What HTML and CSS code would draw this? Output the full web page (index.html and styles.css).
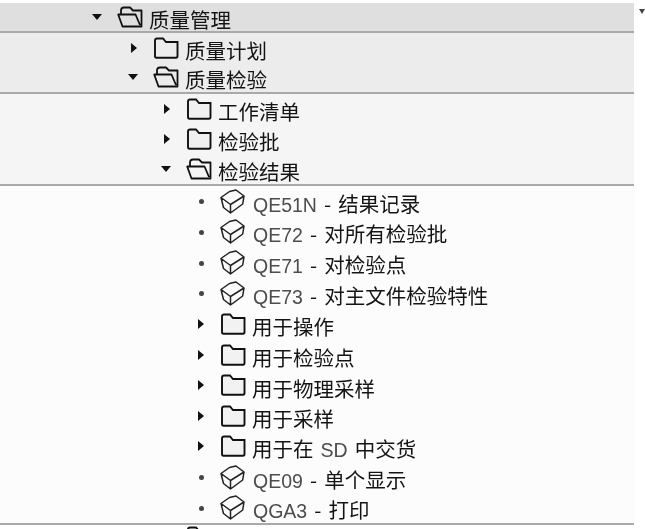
FILE: index.html
```html
<!DOCTYPE html>
<html lang="zh">
<head>
<meta charset="utf-8">
<title>质量检验</title>
<link rel="stylesheet" href="styles.css">
</head>
<body>
<svg class="defs" width="0" height="0" aria-hidden="true">
  <symbol id="closed" viewBox="0 0 26 22"><path d="M2 19V3.5Q2 1.5 4 1.5H10L13 5H24.5V19Q24.5 20.7 23 20.7H3.5Q2 20.7 2 19Z" fill="#eee" fill-opacity=".7" stroke="#111" stroke-width="1.9"/></symbol>
  <symbol id="open" viewBox="0 0 26 22"><path d="M4 8V4.5Q4 1.5 7 1.5H13L16 4.5H24.5V20.5H5.5L1.2 8.5H18.5L23 19" fill="none" stroke="#111" stroke-width="1.8" stroke-linejoin="round"/></symbol>
  <symbol id="cube" viewBox="0 0 25 25"><path d="M1 8.5L9.5 2.5L16 1L24 7L22.7 15L10.5 24L3.5 18.5ZM1 8.5L10.5 15.5L24 7M10.5 15.5V24" fill="none" stroke="#222" stroke-width="1.5" stroke-linejoin="round"/></symbol>
</svg>
<div class="corner-arrow"></div>
<main class="page">
  <section class="band band-a">
    <div class="row l0"><i class="tog down"></i><svg class="folder"><use href="#open"/></svg><span class="label">质量管理</span></div>
  </section>
  <section class="band band-b">
    <div class="row l1"><i class="tog right"></i><svg class="folder"><use href="#closed"/></svg><span class="label">质量计划</span></div>
    <div class="row l1"><i class="tog down"></i><svg class="folder"><use href="#open"/></svg><span class="label">质量检验</span></div>
  </section>
  <section class="band band-c">
    <div class="row l2"><i class="tog right"></i><svg class="folder"><use href="#closed"/></svg><span class="label">工作清单</span></div>
    <div class="row l2"><i class="tog right"></i><svg class="folder"><use href="#closed"/></svg><span class="label">检验批</span></div>
    <div class="row l2"><i class="tog down"></i><svg class="folder"><use href="#open"/></svg><span class="label">检验结果</span></div>
  </section>
  <section class="band band-d">
    <div class="row l3"><i class="tog dot"></i><svg class="cube"><use href="#cube"/></svg><span class="label"><b>QE51N</b> - 结果记录</span></div>
    <div class="row l3"><i class="tog dot"></i><svg class="cube"><use href="#cube"/></svg><span class="label"><b>QE72</b> - 对所有检验批</span></div>
    <div class="row l3"><i class="tog dot"></i><svg class="cube"><use href="#cube"/></svg><span class="label"><b>QE71</b> - 对检验点</span></div>
    <div class="row l3"><i class="tog dot"></i><svg class="cube"><use href="#cube"/></svg><span class="label"><b>QE73</b> - 对主文件检验特性</span></div>
    <div class="row l3"><i class="tog right"></i><svg class="folder"><use href="#closed"/></svg><span class="label">用于操作</span></div>
    <div class="row l3"><i class="tog right"></i><svg class="folder"><use href="#closed"/></svg><span class="label">用于检验点</span></div>
    <div class="row l3"><i class="tog right"></i><svg class="folder"><use href="#closed"/></svg><span class="label">用于物理采样</span></div>
    <div class="row l3"><i class="tog right"></i><svg class="folder"><use href="#closed"/></svg><span class="label">用于采样</span></div>
    <div class="row l3"><i class="tog right"></i><svg class="folder"><use href="#closed"/></svg><span class="label">用于在 <b>SD</b> 中交货</span></div>
    <div class="row l3"><i class="tog dot"></i><svg class="cube"><use href="#cube"/></svg><span class="label"><b>QE09</b> - 单个显示</span></div>
    <div class="row l3"><i class="tog dot"></i><svg class="cube"><use href="#cube"/></svg><span class="label"><b>QGA3</b> - 打印</span></div>
  </section>
  <div class="next l2"><i class="tog"></i><svg class="folder"><use href="#closed"/></svg></div>
</main>
</body>
</html>
```
FILE: styles.css
```css
html, body { margin: 0; padding: 0; background: #fff; }
body { position: relative; width: 645px; height: 529px; overflow: hidden; }
.defs { position: absolute; }
.page {
  width: 634px;
  height: 529px;
  box-sizing: border-box;
  padding-top: 3px;
  overflow: hidden;
  font-family: "Noto Sans CJK SC", "Liberation Sans", sans-serif;
  font-size: 20.5px;
  word-spacing: 2.5px;
  color: #141414;
  filter: blur(.5px);
}
.corner-arrow {
  position: absolute;
  left: 639px;
  top: 9px;
  border-left: 3px solid transparent;
  border-right: 3px solid transparent;
  border-top: 5px solid #444;
}
.band { border-bottom: 2px solid #a9a9a9; }
.band-a { background: #dfdfdf; }
.band-b { background: #ececec; }
.band-c { background: #f5f5f5; }
.band-d { background: #fcfcfc; }
.row { display: flex; align-items: center; height: 29.5px; white-space: nowrap; }
.band-a .row { height: 28px; }
.band-c .row { height: 30px; }
.band-d .row { height: 30.65px; }
.next { display: flex; align-items: flex-start; height: 3px; padding-top: 1px; overflow: hidden; }
.l0 { padding-left: 92px; }
.l1 { padding-left: 128px; }
.l2 { padding-left: 161px; }
.l3 { padding-left: 195px; }
.tog { flex: none; width: 11px; height: 10px; margin-right: 14px; position: relative; }
.tog::before { content: ""; position: absolute; }
.down::before { left: 0; top: 2px; border-left: 5.5px solid transparent; border-right: 5.5px solid transparent; border-top: 6px solid #111; }
.right::before { left: 3px; top: 0; border-top: 5.5px solid transparent; border-bottom: 5.5px solid transparent; border-left: 6px solid #111; }
.dot::before { left: 4px; top: 3px; width: 5px; height: 5px; border-radius: 50%; background: #444; }
.folder { flex: none; width: 26px; height: 22px; margin-right: 6px; }
.cube { flex: none; width: 25px; height: 25px; margin-right: 8px; }
.label { line-height: 24px; margin-top: 4px; }
.band-d .label { margin-top: 5px; }
.label b { font-family: "Liberation Sans", sans-serif; font-weight: 400; font-size: 19.5px; color: #4d4d4d; }
```
